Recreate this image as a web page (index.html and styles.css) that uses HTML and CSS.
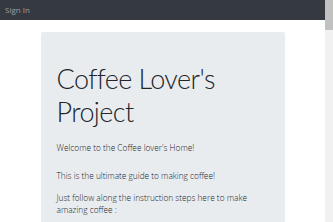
FILE: index.html
```html
<!DOCTYPE html>
<html>
<head>
    <meta charset="utf-8">
    <title>Coffee Lover's Project</title>
    <link rel="stylesheet" href="styles.css">
</head>
<body>
    <div class="page">
        <nav class="navbar">
            <a href="#" class="nav-link">Sign In</a>
        </nav>

        <div class="container">
            <div class="jumbotron">
                <h1 class="display">Coffee Lover's Project</h1>
                <p class="welcome">Welcome to the Coffee lover's Home!</p>
                <p>This is the ultimate guide to making coffee!</p>
                <p>Just follow along the instruction steps here to make amazing coffee :</p>
            </div>
        </div>
    </div>

    <div class="scrollbar">
        <div class="scrollbar-thumb"></div>
    </div>
</body>
</html>
```

FILE: styles.css
```css
body {
    margin: 0;
    display: flex;
    height: 100vh;
    overflow: hidden;
    font-family: "Open Sans", Arial, sans-serif;
    font-size: 8.3px;
    line-height: 12px;
    color: #212529;
    background-color: #fff;
}

.page {
    flex: 1;
    overflow: hidden;
}

.scrollbar {
    width: 8px;
    background-color: #f1f1f1;
}

.scrollbar-thumb {
    height: 30px;
    background-color: #c1c1c1;
}

.navbar {
    display: flex;
    align-items: center;
    height: 20px;
    padding: 0 5px;
    background-color: #343a40;
}

.nav-link {
    color: rgba(255, 255, 255, 0.5);
    text-decoration: none;
    font-size: 8px;
}

.container {
    width: 244px;
    margin: 12px auto 0;
}

.jumbotron {
    background-color: #e9ecef;
    border-radius: 2px;
    padding: 30px 16px;
    min-height: 1500px;
}

.display {
    margin: 0 0 14px;
    font-family: Lato, "Open Sans", sans-serif;
    font-size: 27px;
    font-weight: 300;
    line-height: 33px;
    letter-spacing: -0.6px;
}

.jumbotron p {
    margin: 0 0 10px;
    font-weight: 300;
}

.jumbotron .welcome {
    margin-bottom: 16px;
}
```
